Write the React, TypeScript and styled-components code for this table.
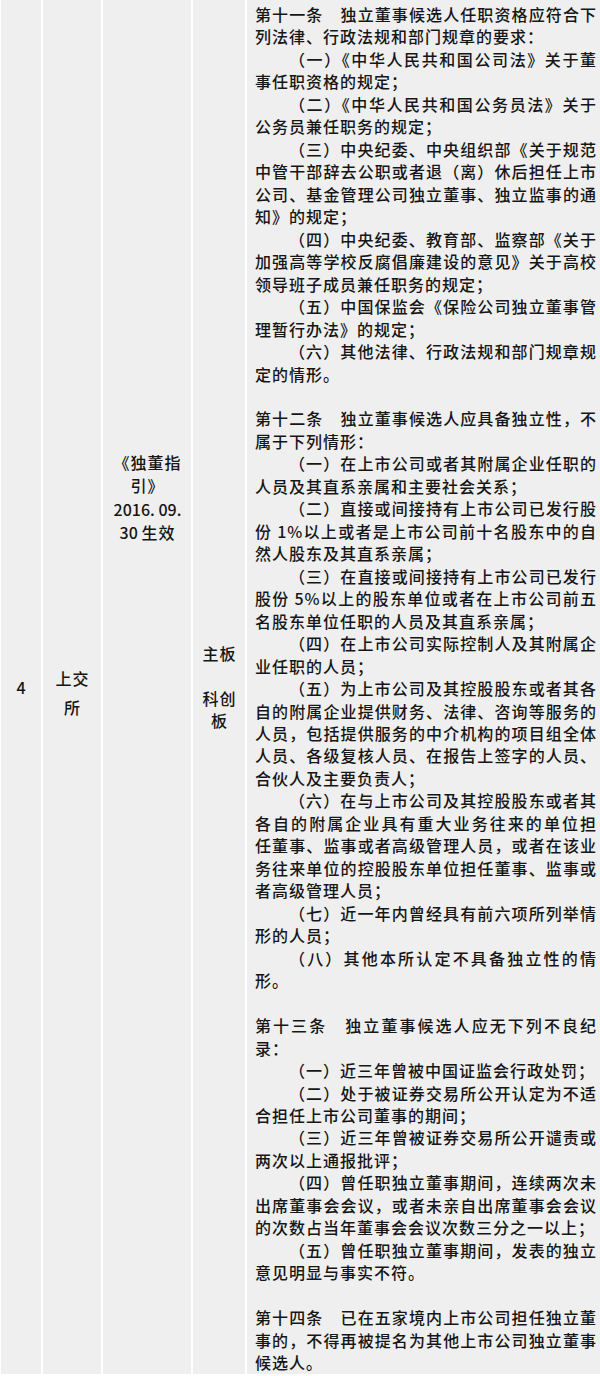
import React from "react";
import styled, { createGlobalStyle } from "styled-components";

const GlobalStyle = createGlobalStyle`
  html, body {
    margin: 0;
    padding: 0;
    background: #ffffff;
  }
  body {
    font-family: "Noto Sans CJK SC", "Noto Sans", sans-serif;
    color: #161616;
  }
`;

const Table = styled.div`
  display: grid;
  grid-template-columns: 40px 58px 88px 52px 353px;
  column-gap: 2px;
  padding-left: 1px;
  width: 600px;
  box-sizing: border-box;
  background: #ffffff;
  font-size: 16px;
  font-weight: 500;
  letter-spacing: 1px;
`;

const Cell = styled.div<{ $valign?: "center" | "start"; $padTop?: number; $padLeft?: number; $padRight?: number }>`
  background: #efefef;
  display: flex;
  flex-direction: column;
  justify-content: ${(p) => (p.$valign === "start" ? "flex-start" : "center")};
  padding-top: ${(p) => p.$padTop ?? 0}px;
  padding-left: ${(p) => p.$padLeft ?? 0}px;
  padding-right: ${(p) => p.$padRight ?? 0}px;
  box-sizing: border-box;
  min-width: 0;
`;

const CenterText = styled.div<{ $lh?: number }>`
  text-align: center;
  line-height: ${(p) => p.$lh ?? 22.47}px;
  margin-right: -1px;
`;

const Digits = styled.span`
  letter-spacing: 0;
`;

const Article = styled.div`
  display: flex;
  flex-direction: column;
`;

const Line = styled.div<{ $fill?: boolean; $indent?: boolean }>`
  line-height: 22.47px;
  height: 22.47px;
  white-space: nowrap;
  text-align: justify;
  text-align-last: ${(p) => (p.$fill ? "justify" : "left")};
  text-indent: ${(p) => (p.$indent ? "34px" : "0")};
`;

const BlankLine = styled.div`
  height: 22.47px;
`;

const articles: string[][][] = [
  [
    ["第十一条　独立董事候选人任职资格应符合下", "列法律、行政法规和部门规章的要求："],
    ["（一）《中华人民共和国公司法》关于董", "事任职资格的规定；"],
    ["（二）《中华人民共和国公务员法》关于", "公务员兼任职务的规定；"],
    [
      "（三）中央纪委、中央组织部《关于规范",
      "中管干部辞去公职或者退（离）休后担任上市",
      "公司、基金管理公司独立董事、独立监事的通",
      "知》的规定；",
    ],
    [
      "（四）中央纪委、教育部、监察部《关于",
      "加强高等学校反腐倡廉建设的意见》关于高校",
      "领导班子成员兼任职务的规定；",
    ],
    ["（五）中国保监会《保险公司独立董事管", "理暂行办法》的规定；"],
    ["（六）其他法律、行政法规和部门规章规", "定的情形。"],
  ],
  [
    ["第十二条　独立董事候选人应具备独立性，不", "属于下列情形："],
    ["（一）在上市公司或者其附属企业任职的", "人员及其直系亲属和主要社会关系；"],
    [
      "（二）直接或间接持有上市公司已发行股",
      "份 1%以上或者是上市公司前十名股东中的自",
      "然人股东及其直系亲属；",
    ],
    [
      "（三）在直接或间接持有上市公司已发行",
      "股份 5%以上的股东单位或者在上市公司前五",
      "名股东单位任职的人员及其直系亲属；",
    ],
    ["（四）在上市公司实际控制人及其附属企", "业任职的人员；"],
    [
      "（五）为上市公司及其控股股东或者其各",
      "自的附属企业提供财务、法律、咨询等服务的",
      "人员，包括提供服务的中介机构的项目组全体",
      "人员、各级复核人员、在报告上签字的人员、",
      "合伙人及主要负责人；",
    ],
    [
      "（六）在与上市公司及其控股股东或者其",
      "各自的附属企业具有重大业务往来的单位担",
      "任董事、监事或者高级管理人员，或者在该业",
      "务往来单位的控股股东单位担任董事、监事或",
      "者高级管理人员；",
    ],
    ["（七）近一年内曾经具有前六项所列举情", "形的人员；"],
    ["（八）其他本所认定不具备独立性的情", "形。"],
  ],
  [
    ["第十三条　独立董事候选人应无下列不良纪", "录："],
    ["（一）近三年曾被中国证监会行政处罚；"],
    ["（二）处于被证券交易所公开认定为不适", "合担任上市公司董事的期间；"],
    ["（三）近三年曾被证券交易所公开谴责或", "两次以上通报批评；"],
    [
      "（四）曾任职独立董事期间，连续两次未",
      "出席董事会会议，或者未亲自出席董事会会议",
      "的次数占当年董事会会议次数三分之一以上；",
    ],
    ["（五）曾任职独立董事期间，发表的独立", "意见明显与事实不符。"],
  ],
  [
    [
      "第十四条　已在五家境内上市公司担任独立董",
      "事的，不得再被提名为其他上市公司独立董事",
      "候选人。",
    ],
  ],
];

export default function App() {
  return (
    <>
      <GlobalStyle />
      <Table>
        <Cell>
          <CenterText>4</CenterText>
        </Cell>
        <Cell $padTop={12}>
          <CenterText $lh={29}>
            上交
            <br />
            所
          </CenterText>
        </Cell>
        <Cell $valign="start" $padTop={451}>
          <CenterText $lh={23.3}>
            《独董指
            <br />
            引》
            <br />
            <Digits>2016. 09.</Digits>
            <br />
            <Digits>30 </Digits>生效
          </CenterText>
        </Cell>
        <Cell>
          <CenterText>
            主板
            <br />
            <br />
            科创
            <br />
            板
          </CenterText>
        </Cell>
        <Cell $valign="start" $padTop={3} $padLeft={8} $padRight={3}>
          {articles.map((article, ai) => (
            <Article key={ai}>
              {ai > 0 && <BlankLine />}
              {article.map((para, pi) =>
                para.map((line, li) => (
                  <Line
                    key={`${pi}-${li}`}
                    $indent={pi > 0 && li === 0}
                    $fill={li < para.length - 1}
                  >
                    {line}
                  </Line>
                ))
              )}
            </Article>
          ))}
        </Cell>
      </Table>
    </>
  );
}
